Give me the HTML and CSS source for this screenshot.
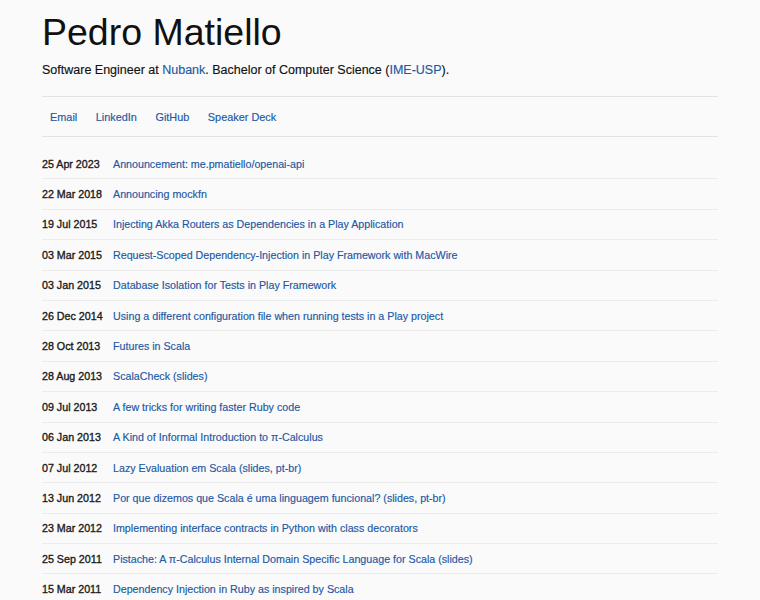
FILE: index.html
```html
<!DOCTYPE html>
<html lang="en">
<head>
<meta charset="utf-8">
<title>Pedro Matiello</title>
<link rel="stylesheet" href="styles.css">
</head>
<body>
<div class="page">
  <header class="header">
    <h1 class="name">Pedro Matiello</h1>
    <p class="bio">Software Engineer at <a href="#">Nubank</a>. Bachelor of Computer Science (<a href="#">IME-USP</a>).</p>
  </header>
  <nav class="nav">
    <a href="#">Email</a>
    <a href="#">LinkedIn</a>
    <a href="#">GitHub</a>
    <a href="#">Speaker Deck</a>
  </nav>
  <ul class="posts">
    <li class="post"><span class="date">25 Apr 2023</span><a href="#">Announcement: me.pmatiello/openai-api</a></li>
    <li class="post"><span class="date">22 Mar 2018</span><a href="#">Announcing mockfn</a></li>
    <li class="post"><span class="date">19 Jul 2015</span><a href="#">Injecting Akka Routers as Dependencies in a Play Application</a></li>
    <li class="post"><span class="date">03 Mar 2015</span><a href="#">Request-Scoped Dependency-Injection in Play Framework with MacWire</a></li>
    <li class="post"><span class="date">03 Jan 2015</span><a href="#">Database Isolation for Tests in Play Framework</a></li>
    <li class="post"><span class="date">26 Dec 2014</span><a href="#">Using a different configuration file when running tests in a Play project</a></li>
    <li class="post"><span class="date">28 Oct 2013</span><a href="#">Futures in Scala</a></li>
    <li class="post"><span class="date">28 Aug 2013</span><a href="#">ScalaCheck (slides)</a></li>
    <li class="post"><span class="date">09 Jul 2013</span><a href="#">A few tricks for writing faster Ruby code</a></li>
    <li class="post"><span class="date">06 Jan 2013</span><a href="#">A Kind of Informal Introduction to π-Calculus</a></li>
    <li class="post"><span class="date">07 Jul 2012</span><a href="#">Lazy Evaluation em Scala (slides, pt-br)</a></li>
    <li class="post"><span class="date">13 Jun 2012</span><a href="#">Por que dizemos que Scala é uma linguagem funcional? (slides, pt-br)</a></li>
    <li class="post"><span class="date">23 Mar 2012</span><a href="#">Implementing interface contracts in Python with class decorators</a></li>
    <li class="post"><span class="date">25 Sep 2011</span><a href="#">Pistache: A π-Calculus Internal Domain Specific Language for Scala (slides)</a></li>
    <li class="post"><span class="date">15 Mar 2011</span><a href="#">Dependency Injection in Ruby as inspired by Scala</a></li>
  </ul>
</div>
</body>
</html>
```

FILE: styles.css
```css
html, body {
  margin: 0;
  padding: 0;
  background: #fafafa;
}

body {
  font-family: "Liberation Sans", Arial, Helvetica, sans-serif;
  color: #222;
  -webkit-text-stroke: 0.15px currentColor;
}

a {
  color: #1c58a4;
  text-decoration: none;
}

.page {
  width: 676px;
  margin: 0 auto;
}

.header {
  padding-top: 10px;
  padding-bottom: 18px;
  border-bottom: 1px solid #e2e2e2;
}

.name {
  margin: 0;
  font-size: 37.5px;
  font-weight: normal;
  line-height: 44px;
  color: #111;
  -webkit-text-stroke: 0;
}

.bio {
  margin: 8px 0 0 0;
  font-size: 12.5px;
  line-height: 16px;
  color: #111;
}

.nav {
  display: flex;
  gap: 18.5px;
  padding: 0 8px;
  height: 39px;
  align-items: center;
  border-bottom: 1px solid #e2e2e2;
  font-size: 10.9px;
}

.posts {
  list-style: none;
  margin: 12px 0 0 0;
  padding: 0;
}

.post {
  display: flex;
  align-items: center;
  height: 30.4px;
  box-sizing: border-box;
  border-bottom: 1px solid #ececec;
  font-size: 10.7px;
}

.date {
  width: 71px;
  flex: none;
  color: #1a1a1a;
  -webkit-text-stroke: 0.35px currentColor;
}
```
